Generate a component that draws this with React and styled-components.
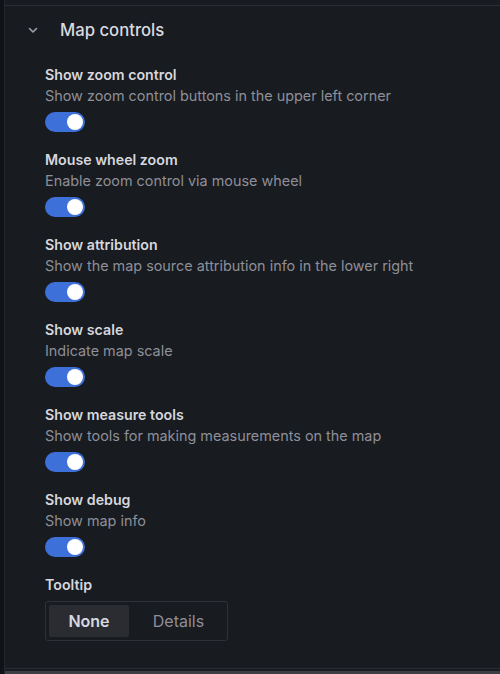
import styled, { createGlobalStyle } from "styled-components"

const Global = createGlobalStyle`
  html, body {
    margin: 0;
    padding: 0;
    background: #181b1f;
  }
  body {
    font-family: Inter, "Noto Sans", sans-serif;
    color: #ccccdc;
  }
`

const Page = styled.div`
  display: flex;
  width: 500px;
  height: 674px;
  background: #181b1f;
  overflow: hidden;
`

const Gutter = styled.div`
  width: 4px;
  background: #111217;
  flex-shrink: 0;
`

const Panel = styled.div`
  flex: 1;
  display: flex;
  flex-direction: column;
  border-left: 1px solid #24272c;
  padding-top: 5px;
`

const Section = styled.section`
  flex: 1;
  border-top: 1px solid #2a2d33;
  border-bottom: 1px solid #2a2d33;
  display: flex;
  flex-direction: column;
`

const Footer = styled.div`
  height: 3px;
  margin-top: 2px;
  background: #3b3e44;
`

const Header = styled.div`
  display: flex;
  align-items: center;
  height: 48px;
  padding-left: 22px;
`

const Chevron = styled.svg`
  width: 12px;
  height: 12px;
  margin-right: 21px;
`

const Title = styled.h2`
  margin: 0;
  font-size: 16.7px;
  font-weight: 500;
  color: #d8d9e0;
`

const Body = styled.div`
  display: flex;
  flex-direction: column;
  gap: 19px;
  padding: 12px 0 0 40px;
`

const Field = styled.div`
  display: flex;
  flex-direction: column;
`

const Label = styled.div`
  font-size: 14.2px;
  line-height: 18px;
  font-weight: 600;
  color: #d6d7de;
`

const Description = styled.div`
  margin-top: 3px;
  font-size: 14.4px;
  line-height: 18px;
  color: #8e8f99;
`

const Switch = styled.div`
  margin-top: 7px;
  width: 40px;
  height: 20px;
  border-radius: 10px;
  background: ${p => (p.$on ? "#3d71d9" : "#2c2f35")};
  display: flex;
  align-items: center;
  justify-content: ${p => (p.$on ? "flex-end" : "flex-start")};
  padding: 0 2px;
  box-sizing: border-box;
`

const Knob = styled.span`
  width: 16px;
  height: 16px;
  border-radius: 50%;
  background: #ffffff;
`

const Radio = styled.div`
  margin-top: 7px;
  display: inline-flex;
  align-self: flex-start;
  gap: 4px;
  padding: 3px;
  border: 1px solid #2e3137;
  border-radius: 3px;
`

const Option = styled.div`
  height: 32px;
  padding: 0 19px;
  min-width: ${p => (p.$active ? "42px" : "53px")};
  display: flex;
  align-items: center;
  justify-content: center;
  font-size: 16px;
  border-radius: 2px;
  font-weight: ${p => (p.$active ? 600 : 400)};
  color: ${p => (p.$active ? "#d8d9e0" : "#8e8f99")};
  background: ${p => (p.$active ? "#2a2c31" : "transparent")};
`

const fields = [
  ["Show zoom control", "Show zoom control buttons in the upper left corner"],
  ["Mouse wheel zoom", "Enable zoom control via mouse wheel"],
  ["Show attribution", "Show the map source attribution info in the lower right"],
  ["Show scale", "Indicate map scale"],
  ["Show measure tools", "Show tools for making measurements on the map"],
  ["Show debug", "Show map info"],
]

export default function App() {
  return (
    <>
      <Global />
      <Page>
        <Gutter />
        <Panel>
          <Section>
            <Header>
              <Chevron viewBox="0 0 12 12">
                <path d="M2.5 4.5 L6 8 L9.5 4.5" fill="none" stroke="#9fa1aa" strokeWidth="1.6" strokeLinecap="round" strokeLinejoin="round" />
              </Chevron>
              <Title>Map controls</Title>
            </Header>
            <Body>
              {fields.map(([label, desc]) => (
                <Field key={label}>
                  <Label>{label}</Label>
                  <Description>{desc}</Description>
                  <Switch $on>
                    <Knob />
                  </Switch>
                </Field>
              ))}
              <Field>
                <Label>Tooltip</Label>
                <Radio>
                  <Option $active>None</Option>
                  <Option>Details</Option>
                </Radio>
              </Field>
            </Body>
          </Section>
          <Footer />
        </Panel>
      </Page>
    </>
  )
}
